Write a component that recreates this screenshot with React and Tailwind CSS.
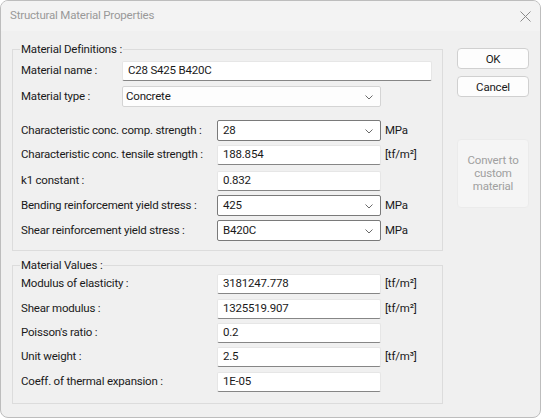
import React from 'react';

const font = { fontFamily: 'Roboto, "Noto Sans", sans-serif' };

const Chevron = () => (
    <svg width="8" height="5" viewBox="0 0 8 5" className="absolute right-[7px] top-[8px]">
        <polyline points="0.5,0.5 4,4 7.5,0.5" fill="none" stroke="#6a6a6a" strokeWidth="1" />
    </svg>
);

const TextBox = ({ value, width = 'w-[164px]' }) => (
    <div className={`${width} h-[20px] bg-white border border-[#e6e6e6] border-b-[#868686] rounded-[2px] pl-[5px] flex items-center text-[#1a1a1a]`}>
        {value}
    </div>
);

const Combo = ({ value, width = 'w-[164px]', light }) => (
    <div className={`relative ${width} h-[21px] ${light ? 'bg-[#fdfdfd] border-[#d4d4d4] pl-[3px]' : 'bg-white border-[#7a7a7a] pl-[5px]'} border rounded-[2px] flex items-center text-[#1a1a1a]`}>
        {value}
        <Chevron />
    </div>
);

const Row = ({ label, children, unit, mt, left = 'w-[196px]' }) => (
    <div className={`flex items-center ${mt}`}>
        <div className={`${left} shrink-0 text-[#1a1a1a]`}>{label}</div>
        {children}
        {unit && <div className="ml-[4px] text-[#1a1a1a]">{unit}</div>}
    </div>
);

const Group = ({ title, children, className }) => (
    <div className={`relative border border-[#dcdcdc] ${className}`}>
        <span className="absolute left-[7px] top-[-9px] px-[1px] bg-[#f0f0f0] leading-[16px] text-[#1a1a1a]">{title}</span>
        {children}
    </div>
);

const Button = ({ children, className = 'h-[21px]', disabled }) => (
    <div className={`w-[72px] ${className} rounded-[4px] border flex items-center justify-center text-center ${disabled ? 'bg-[#f5f5f5] border-[#ebebeb] text-[#a0a0a0] leading-[13px]' : 'bg-[#fdfdfd] border-[#d0d0d0] text-[#1a1a1a] leading-[16px]'}`}>
        {children}
    </div>
);

export default function App() {
    return (
        <div className="w-[542px] h-[419px] bg-white text-[11.5px] tracking-[-0.2px] whitespace-nowrap" style={font}>
            <div className="w-[541px] h-[418px] border border-[#bdbdbd] rounded-[8px] overflow-hidden bg-[#f0f0f0] flex flex-col">
                <div className="h-[30px] bg-[#f3f3f3] flex items-center justify-between pl-[9px] pr-[9px] shrink-0">
                    <span className="text-[#999999]">Structural Material Properties</span>
                    <svg width="11" height="11" viewBox="0 0 11 11">
                        <path d="M0.5 0.5 L10.5 10.5 M10.5 0.5 L0.5 10.5" stroke="#8a8a8a" strokeWidth="1" />
                    </svg>
                </div>
                <div className="flex pl-[11px] pt-[18px]">
                    <div className="flex flex-col w-[431px]">
                        <Group title="Material Definitions :" className="h-[202px] pt-[11px] pl-[8px]">
                            <Row label="Material name :" left="w-[101px]">
                                <TextBox value="C28 S425 B420C" width="w-[310px]" />
                            </Row>
                            <Row label="Material type :" left="w-[101px]" mt="mt-[5px]">
                                <Combo value="Concrete" width="w-[259px]" light />
                            </Row>
                            <Row label="Characteristic conc. comp. strength :" unit="MPa" mt="mt-[13px]">
                                <Combo value="28" />
                            </Row>
                            <Row label="Characteristic conc. tensile strength :" unit="[tf/m²]" mt="mt-[4px]">
                                <TextBox value="188.854" />
                            </Row>
                            <Row label="k1 constant :" mt="mt-[6px]">
                                <TextBox value="0.832" />
                            </Row>
                            <Row label="Bending reinforcement yield stress :" unit="MPa" mt="mt-[4px]">
                                <Combo value="425" />
                            </Row>
                            <Row label="Shear reinforcement yield stress :" unit="MPa" mt="mt-[4px]">
                                <Combo value="B420C" />
                            </Row>
                        </Group>
                        <Group title="Material Values :" className="mt-[14px] h-[139px] pt-[8px] pl-[8px]">
                            <Row label="Modulus of elasticity :" unit="[tf/m²]">
                                <TextBox value="3181247.778" />
                            </Row>
                            <Row label="Shear modulus :" unit="[tf/m²]" mt="mt-[5px]">
                                <TextBox value="1325519.907" />
                            </Row>
                            <Row label="Poisson's ratio :" mt="mt-[4px]">
                                <TextBox value="0.2" />
                            </Row>
                            <Row label="Unit weight :" unit="[tf/m³]" mt="mt-[4px]">
                                <TextBox value="2.5" />
                            </Row>
                            <Row label="Coeff. of thermal expansion :" mt="mt-[5px]">
                                <TextBox value="1E-05" />
                            </Row>
                        </Group>
                    </div>
                    <div className="flex flex-col ml-[14px] mt-[-1px]">
                        <Button>OK</Button>
                        <Button className="h-[21px] mt-[7px]">Cancel</Button>
                        <Button className="h-[69px] mt-[42px] px-[4px] whitespace-normal" disabled>Convert to custom material</Button>
                    </div>
                </div>
            </div>
        </div>
    );
}
